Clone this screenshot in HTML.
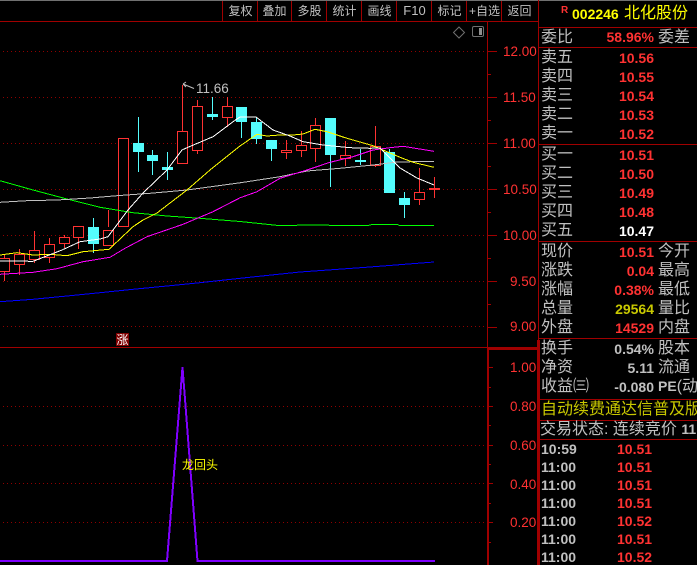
<!DOCTYPE html>
<html><head><meta charset="utf-8"><style>
html,body{margin:0;padding:0;background:#000;width:697px;height:565px;overflow:hidden}
#w{position:relative;width:697px;height:565px;overflow:hidden;background:#000;font-family:"Liberation Sans","WenQuanYi Zen Hei","Noto Sans CJK SC",sans-serif}
svg{position:absolute;left:0;top:0}
.t,.n,.b,.a{position:absolute;white-space:nowrap;height:20px;line-height:20px}
.t{font-size:16px;color:#c0c0c0;font-family:"WenQuanYi Zen Hei","Liberation Sans","Noto Sans CJK SC",sans-serif}
.n{font-size:14px;font-weight:bold;color:#ff3232;right:43px;text-align:right}
.r{color:#ff3232}.g{color:#c0c0c0}.y{color:#c8c800}
.b{font-size:12px;color:#c0c0c0;text-align:center;width:35px;top:1px;font-family:"WenQuanYi Zen Hei","Liberation Sans","Noto Sans CJK SC",sans-serif}
.a{font-size:13.5px;color:#ff3232;left:502px;width:30px;text-align:left}
.k{position:absolute;font-size:14px;font-weight:bold;height:18px;line-height:18px;white-space:nowrap}
</style></head><body><div id="w">
<svg width="697" height="565" viewBox="0 0 697 565">
<g shape-rendering="crispEdges">
<rect x="0" y="0" width="697" height="1" fill="#707070"/>
<g stroke="#a00000" stroke-width="1" fill="none">
<path d="M0 21.5H538M222.5 1V21M257.5 1V21M291.5 1V21M326.5 1V21M361.5 1V21M396.5 1V21M431.5 1V21M466.5 1V21M501.5 1V21"/>
<path d="M487.5 21V347M0 347.5H538"/>
<path d="M487.5 51.5H497M487.5 97.5H497M487.5 143.5H497M487.5 189.5H497M487.5 235.5H497M487.5 281.5H497M487.5 327.5H497"/>
<path d="M487.5 74.5H491M487.5 120.5H491M487.5 166.5H491M487.5 212.5H491M487.5 258.5H491M487.5 304.5H491"/>
<path d="M489 367.5H493M489 406.5H493M489 445.5H493M489 483.5H493M489 522.5H493M489 387.5H491M489 425.5H491M489 464.5H491M489 503.5H491M489 542.5H491"/>
<path d="M538 27.5H697M538 47.5H697M538 144.5H697M538 241.5H697M538 338.5H697M538 399.5H697M538 420.5H697M538 439.5H697"/>
<path d="M538.5 0V565"/>
</g>
<rect x="487" y="348" width="51" height="2" fill="#a00000"/>
<rect x="487" y="348" width="2" height="217" fill="#a00000"/>
<rect x="537" y="340" width="3" height="225" fill="#a00000"/>
<g stroke="#900000" stroke-width="1" stroke-dasharray="1 3" fill="none">
<path d="M3 51.5H486M3 97.5H486M3 143.5H486M3 189.5H486M3 235.5H486M3 281.5H486M3 326.5H486"/>
<path d="M3 406.5H486M3 445.5H486M3 483.5H486M3 522.5H486"/>
</g>
<!-- wicks -->
<g stroke="#ff3232" stroke-width="1" fill="none">
<path d="M4.5 255V281M19.5 249V275M34.5 231V263M49.5 238V263M64.5 235V248M78.5 226V249M108.5 210V227M182.5 85V132M197.5 100V154M227.5 97V127M286.5 140V159M301.5 131V157M315.5 118V162M345.5 141V166M375.5 126V167M419.5 168V205M434.5 177V198"/>
</g>
<g stroke="#54fcfc" stroke-width="1" fill="none">
<path d="M93.5 218V253M138.5 117V172M152.5 150V175M167.5 152V180M212.5 97V120M241.5 107V138M256.5 117V144M271.5 140V161M330.5 118V187M360.5 149V165M389.5 149V193M404.5 192V218"/>
</g>
<!-- red bodies -->
<g stroke="#ff3232" stroke-width="1" fill="#000">
<rect x="-1.5" y="258.5" width="11" height="13"/>
<rect x="14.5" y="254.5" width="10" height="10"/>
<rect x="29.5" y="250.5" width="10" height="9"/>
<rect x="44.5" y="244.5" width="10" height="13"/>
<rect x="59.5" y="237.5" width="10" height="6"/>
<rect x="73.5" y="226.5" width="10" height="11"/>
<rect x="103.5" y="230.5" width="10" height="15"/>
<rect x="118.5" y="138.5" width="10" height="88"/>
<rect x="177.5" y="131.5" width="10" height="32"/>
<rect x="192.5" y="106.5" width="10" height="44"/>
<rect x="222.5" y="106.5" width="10" height="11"/>
<rect x="281.5" y="150.5" width="10" height="2"/>
<rect x="296.5" y="145.5" width="10" height="5"/>
<rect x="310.5" y="125.5" width="10" height="23"/>
<rect x="340.5" y="155.5" width="10" height="3"/>
<rect x="370.5" y="146.5" width="10" height="19"/>
<rect x="414.5" y="192.5" width="10" height="7"/>
</g>
<rect x="429" y="188" width="11" height="2" fill="#ff3232"/>
<!-- cyan bodies -->
<g fill="#54fcfc" stroke="none">
<rect x="88" y="227" width="11" height="17"/>
<rect x="133" y="143" width="11" height="9"/>
<rect x="147" y="155" width="11" height="6"/>
<rect x="162" y="167" width="11" height="3"/>
<rect x="207" y="114" width="11" height="3"/>
<rect x="236" y="107" width="11" height="15"/>
<rect x="251" y="122" width="11" height="17"/>
<rect x="266" y="140" width="11" height="9"/>
<rect x="325" y="118" width="11" height="37"/>
<rect x="355" y="160" width="11" height="2"/>
<rect x="384" y="152" width="11" height="41"/>
<rect x="399" y="198" width="11" height="7"/>
</g>
<!-- moving averages -->
<g fill="none" stroke-width="1">
<polyline stroke="#00ff00" points="0,180.7 33,190 67,199 100,207.3 133,212.7 167,216 200,218.3 240,221.5 267,224.3 280,225.7 307,225 367,225.7 373,224.3 397,224.3 400,225.7 434,225.7"/>
<polyline stroke="#0000ff" points="0,301.7 33,299.3 67,296 100,292.7 133,289.3 167,286 200,282.7 240,278.3 300,272 370,267 434,262"/>
<polyline stroke="#c0c0c0" points="0,202.3 27,200.7 57,200 90,198 117,195.7 150,193.3 187,190 240,182.8 280,176.7 307,171 340,168.3 373,165 397,162 434,161.3"/>
<polyline stroke="#ff00ff" points="0,274.3 33,272.3 57,268.7 83,261.7 110,257.3 125,248.3 147,236.7 183,224.3 213,211.7 240,197.8 257,191.7 280,178.3 307,170 330,162.3 353,156.7 373,150 390,147.7 403,146.3 434,151.3"/>
<polyline stroke="#ffff00" points="0,255 17,252.7 33,255 50,254.3 67,255.7 83,251.7 109,249.3 133,226.7 143,220 157,213 170,203 187,190 210,170 240,146 257,134.3 267,136 280,135 293,135 303,134 315,129.3 327,131.7 347,138.3 373,145.7 387,151.7 400,157.3 413,162.3 434,167.3"/>
<polyline stroke="#ffffff" stroke-width="1" points="0,261 33,261.3 62,250 80,241.7 100,239 108,236.7 128,210 143,193 167,170 182,150 187,147.7 213,136.7 233,121.7 240,117 256,117 273,130 290,136 303,141.7 323,145 350,147.7 370,148.3 380,148 387,155 400,168 417,178 434,185"/>
</g>
<!-- lower indicator -->
<path d="M0 561H167L182.500 367L197.500 561H435" fill="none" stroke="#7f00ff" stroke-width="2"/>
<rect x="116" y="333" width="13" height="13" fill="#800000"/>
</g>
<!-- marker -->
<path d="M183 84L194 88.500M183 84L186 82M183 84L186 87" fill="none" stroke="#c0c0c0" stroke-width="1"/>
<!-- diamond + panel icon -->
<path d="M459 27L464.500 32.500L459 38L453.500 32.500Z" fill="none" stroke="#707070" stroke-width="1"/>
<rect x="472.500" y="26.500" width="11" height="10" rx="1.500" fill="none" stroke="#707070" stroke-width="1"/>
<rect x="479" y="28" width="3" height="7" fill="#909090"/>
</svg>

<div class="b" style="left:223px">复权</div>
<div class="b" style="left:257px">叠加</div>
<div class="b" style="left:292px">多股</div>
<div class="b" style="left:327px">统计</div>
<div class="b" style="left:362px">画线</div>
<div class="b" style="left:397px;font-size:13px;font-family:'Liberation Sans',sans-serif">F10</div>
<div class="b" style="left:432px">标记</div>
<div class="b" style="left:467px">+自选</div>
<div class="b" style="left:502px">返回</div>

<div class="a" style="left:503px;top:42px">12.00</div>
<div class="a" style="left:503px;top:88px">11.50</div>
<div class="a" style="left:503px;top:134px">11.00</div>
<div class="a" style="left:503px;top:180px">10.50</div>
<div class="a" style="left:503px;top:226px">10.00</div>
<div class="a" style="left:510px;top:272px">9.50</div>
<div class="a" style="left:510px;top:317px">9.00</div>
<div class="a" style="left:510px;top:358px">1.00</div>
<div class="a" style="left:510px;top:397px">0.80</div>
<div class="a" style="left:510px;top:436px">0.60</div>
<div class="a" style="left:510px;top:475px">0.40</div>
<div class="a" style="left:510px;top:513px">0.20</div>

<div class="a" style="left:196px;top:79px;color:#c0c0c0">11.66</div>
<div class="b" style="left:105px;top:330px;color:#fff">涨</div>
<div class="b" style="left:182px;top:455px;width:36px;color:#ff0">龙回头</div>

<div class="t" style="left:561px;top:1px;font:bold 10px 'Liberation Sans',sans-serif;line-height:20px;color:#ff3232">R</div>
<div class="t" style="left:572px;top:4px;font:bold 14px 'Liberation Sans',sans-serif;line-height:20px;color:#ff0">002246</div>
<div class="t" style="left:624px;top:4px;color:#ff0">北化股份</div>

<div class="t" style="left:541px;top:28px">委比</div><div class="n" style="top:27px">58.96%</div><div class="t" style="left:658px;top:28px">委差</div>

<div class="t" style="left:541px;top:48px">卖五</div><div class="n" style="top:48px">10.56</div>
<div class="t" style="left:541px;top:67px">卖四</div><div class="n" style="top:67px">10.55</div>
<div class="t" style="left:541px;top:86px">卖三</div><div class="n" style="top:86px">10.54</div>
<div class="t" style="left:541px;top:105px">卖二</div><div class="n" style="top:105px">10.53</div>
<div class="t" style="left:541px;top:124px">卖一</div><div class="n" style="top:124px">10.52</div>

<div class="t" style="left:541px;top:145px">买一</div><div class="n" style="top:145px">10.51</div>
<div class="t" style="left:541px;top:164px">买二</div><div class="n" style="top:164px">10.50</div>
<div class="t" style="left:541px;top:183px">买三</div><div class="n" style="top:183px">10.49</div>
<div class="t" style="left:541px;top:202px">买四</div><div class="n" style="top:202px">10.48</div>
<div class="t" style="left:541px;top:221px">买五</div><div class="n" style="top:221px;color:#fff">10.47</div>

<div class="t" style="left:541px;top:242px">现价</div><div class="n" style="top:242px">10.51</div><div class="t" style="left:658px;top:242px">今开</div>
<div class="t" style="left:541px;top:261px">涨跌</div><div class="n" style="top:261px">0.04</div><div class="t" style="left:658px;top:261px">最高</div>
<div class="t" style="left:541px;top:280px">涨幅</div><div class="n" style="top:280px">0.38%</div><div class="t" style="left:658px;top:280px">最低</div>
<div class="t" style="left:541px;top:299px">总量</div><div class="n y" style="top:299px;color:#c8c800">29564</div><div class="t" style="left:658px;top:299px">量比</div>
<div class="t" style="left:541px;top:318px">外盘</div><div class="n" style="top:318px">14529</div><div class="t" style="left:658px;top:318px">内盘</div>

<div class="t" style="left:541px;top:339px">换手</div><div class="n g" style="top:339px;color:#c0c0c0">0.54%</div><div class="t" style="left:658px;top:339px">股本</div>
<div class="t" style="left:541px;top:358px">净资</div><div class="n g" style="top:358px;color:#c0c0c0">5.11</div><div class="t" style="left:658px;top:358px">流通</div>
<div class="t" style="left:541px;top:377px">收益㈢</div><div class="n g" style="top:377px;color:#c0c0c0">-0.080</div><div class="t" style="left:658px;top:377px;width:39px;overflow:hidden"><b style="font:bold 14px 'Liberation Sans',sans-serif">PE</b>(动)</div>

<div class="t" style="left:541px;top:400px;width:156px;overflow:hidden;color:#c8c800">自动续费通达信普及版</div>
<div class="t" style="left:540px;top:420px;width:157px;overflow:hidden">交易状态: 连续竞价 <b style="font:bold 14px 'Liberation Sans',sans-serif">11</b></div>

<div class="k g" style="left:541px;top:440px">10:59</div><div class="k r" style="left:617px;top:440px">10.51</div>
<div class="k g" style="left:541px;top:458px">11:00</div><div class="k r" style="left:617px;top:458px">10.51</div>
<div class="k g" style="left:541px;top:476px">11:00</div><div class="k r" style="left:617px;top:476px">10.51</div>
<div class="k g" style="left:541px;top:494px">11:00</div><div class="k r" style="left:617px;top:494px">10.51</div>
<div class="k g" style="left:541px;top:512px">11:00</div><div class="k r" style="left:617px;top:512px">10.52</div>
<div class="k g" style="left:541px;top:530px">11:00</div><div class="k r" style="left:617px;top:530px">10.51</div>
<div class="k g" style="left:541px;top:548px">11:00</div><div class="k r" style="left:617px;top:548px">10.52</div>
</div></body></html>
